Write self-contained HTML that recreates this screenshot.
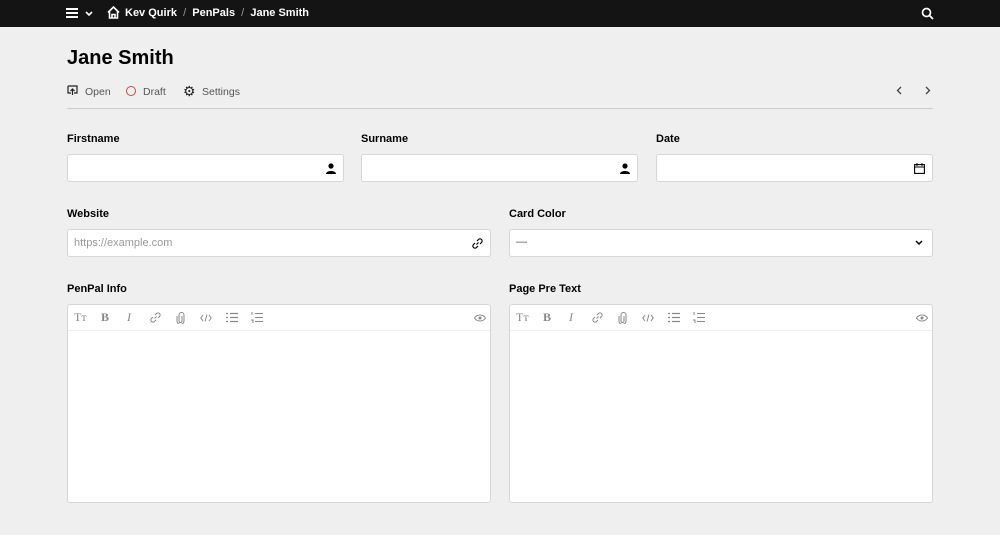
<!DOCTYPE html><html><head><style>
*{box-sizing:border-box;margin:0;padding:0}
body{width:1000px;height:535px;background:#efefef;font-family:"Liberation Sans",sans-serif;position:relative;overflow:hidden;color:#000}
.top{position:absolute;left:0;top:0;width:1000px;height:27px;background:#141414;color:#fff;font-size:11px}
.a{position:absolute}
h1{position:absolute;left:67px;top:47px;font-size:20px;font-weight:bold}
.btn{position:absolute;top:86px;font-size:10.5px;color:#555}
.hr{position:absolute;left:67px;top:108px;width:866px;height:1px;background:#ccc}
.lbl{position:absolute;font-size:11px;font-weight:bold}
.in{position:absolute;background:#fff;border:1px solid #d6d6d6;border-radius:3px}
.tb{position:absolute;left:0;top:0;right:0;height:26px;border-bottom:1px solid #eee;font-size:12px;color:#888}
.tb span{position:absolute;top:5px;font-family:"Liberation Serif",serif}
.tb svg{position:absolute;top:7px}
</style></head><body>
<div class="top">
<div class="a" style="left:66px;top:8px;width:12px;height:2px;background:#fff;box-shadow:0 4px 0 #fff,0 8px 0 #fff"></div>
<svg class="a" style="left:85px;top:11px" width="8" height="6"><path d="M1 1l3 3 3-3" fill="none" stroke="#fff" stroke-width="1.6"/></svg>
<svg class="a" style="left:107px;top:6px" width="13" height="13" viewBox="0 0 13 13"><path d="M1 6.5L6.5 1 12 6.5M2.5 5v7h8V5M5 12V8.5h3V12" fill="none" stroke="#fff" stroke-width="1.6"/></svg>
<div class="a" style="left:125px;top:7px;font-weight:bold">Kev Quirk &nbsp;<span style="color:#999;font-weight:normal">/</span>&nbsp; PenPals &nbsp;<span style="color:#999;font-weight:normal">/</span>&nbsp; Jane Smith</div>
<svg class="a" style="left:921px;top:7px" width="13" height="13" viewBox="0 0 13 13"><circle cx="5.5" cy="5.5" r="4" fill="none" stroke="#fff" stroke-width="1.7"/><path d="M8.5 8.5L12 12" stroke="#fff" stroke-width="1.8"/></svg>
</div>
<h1>Jane Smith</h1>
<svg class="a" style="left:67px;top:85px" width="11" height="11" viewBox="0 0 11 11"><path d="M1 1h9v7H7M4 8H1V1M5.5 4v6M3.5 6l2-2 2 2" fill="none" stroke="#222" stroke-width="1.2"/></svg>
<div class="btn" style="left:85px">Open</div>
<div class="a" style="left:126px;top:86px;width:10px;height:10px;border:1.3px solid #d04545;border-radius:50%"></div>
<div class="btn" style="left:143px">Draft</div>
<div class="a" style="left:183px;top:83px;font-size:14px;color:#222">⚙</div>
<div class="btn" style="left:202px">Settings</div>
<svg class="a" style="left:896px;top:86px" width="6" height="9"><path d="M5 1L1.5 4.5 5 8" fill="none" stroke="#444" stroke-width="1.3"/></svg>
<svg class="a" style="left:925px;top:86px" width="6" height="9"><path d="M1 1l3.5 3.5L1 8" fill="none" stroke="#444" stroke-width="1.3"/></svg>
<div class="hr"></div>

<div class="lbl" style="left:67px;top:133px">Firstname</div>
<div class="lbl" style="left:361px;top:133px">Surname</div>
<div class="lbl" style="left:656px;top:133px">Date</div>
<div class="in" style="left:67px;top:154px;width:277px;height:28px"><svg class="a" style="right:7px;top:8px" width="10" height="11"><circle cx="5" cy="3" r="2.6"/><path d="M0 11c0-4 10-4 10 0z"/></svg></div>
<div class="in" style="left:361px;top:154px;width:277px;height:28px"><svg class="a" style="right:7px;top:8px" width="10" height="11"><circle cx="5" cy="3" r="2.6"/><path d="M0 11c0-4 10-4 10 0z"/></svg></div>
<div class="in" style="left:656px;top:154px;width:277px;height:28px"><svg class="a" style="right:7px;top:8px" width="11" height="11"><rect x=".6" y="1.6" width="9.8" height="8.8" fill="none" stroke="#000" stroke-width="1.1"/><path d="M1 4h9M3 0v3M8 0v3" stroke="#000"/></svg></div>

<div class="lbl" style="left:67px;top:208px">Website</div>
<div class="lbl" style="left:509px;top:208px">Card Color</div>
<div class="in" style="left:67px;top:229px;width:424px;height:28px"><span class="a" style="left:6px;top:7px;font-size:11px;color:#999">https://example.com</span><svg class="a" style="right:7px;top:8px" width="11" height="11" viewBox="0 0 11 11"><path d="M4.5 6.5l2-2M5 3l1.5-1.5a2 2 0 013 3L8 6M6 8L4.5 9.5a2 2 0 01-3-3L3 5" fill="none" stroke="#000" stroke-width="1.2"/></svg></div>
<div class="in" style="left:509px;top:229px;width:424px;height:28px"><span class="a" style="left:6px;top:6px;font-size:11px;color:#555">—</span><svg class="a" style="right:9px;top:10px" width="8" height="6"><path d="M1 1l3 3 3-3" fill="none" stroke="#000" stroke-width="1.5"/></svg></div>

<div class="lbl" style="left:67px;top:283px">PenPal Info</div>
<div class="lbl" style="left:509px;top:283px">Page Pre Text</div>
<div class="in" style="left:67px;top:304px;width:424px;height:199px"><div class="tb">
<span style="left:6px">Tт</span><span style="left:33px;font-weight:bold">B</span><span style="left:59px;font-style:italic">I</span>
<svg style="left:82px" width="11" height="11" viewBox="0 0 11 11"><path d="M4.5 6.5l2-2M5 3l1.5-1.5a2 2 0 013 3L8 6M6 8L4.5 9.5a2 2 0 01-3-3L3 5" fill="none" stroke="#888" stroke-width="1"/></svg>
<svg style="left:108px" width="9" height="12" viewBox="0 0 9 12"><path d="M6 4v5a1.5 1.5 0 01-3 0V3a2.5 2.5 0 015 0v6a3.5 3.5 0 01-7 0V4" fill="none" stroke="#888" stroke-width="1"/></svg>
<svg style="left:132px;top:9px" width="12" height="8" viewBox="0 0 12 8"><path d="M3 1L0.8 4 3 7M9 1l2.2 3L9 7M7 0.5L5 7.5" fill="none" stroke="#888"/></svg>
<svg style="left:158px" width="12" height="11" viewBox="0 0 12 11"><path d="M0 1.5h2M0 5.5h2M0 9.5h2M4 1.5h8M4 5.5h8M4 9.5h8" stroke="#888" stroke-width="1.3"/></svg>
<svg style="left:183px" width="12" height="11" viewBox="0 0 12 11"><path d="M1 0v3M4 1.5h8M4 5.5h8M4 9.5h8M0 8h2v3" fill="none" stroke="#888"/></svg>
<svg style="left:406px;top:9px" width="12" height="8" viewBox="0 0 12 8"><path d="M0.5 4C3 0 9 0 11.5 4 9 8 3 8 0.5 4z" fill="none" stroke="#888"/><circle cx="6" cy="4" r="1.5" fill="#888"/></svg>
</div></div>
<div class="in" style="left:509px;top:304px;width:424px;height:199px"><div class="tb">
<span style="left:6px">Tт</span><span style="left:33px;font-weight:bold">B</span><span style="left:59px;font-style:italic">I</span>
<svg style="left:82px" width="11" height="11" viewBox="0 0 11 11"><path d="M4.5 6.5l2-2M5 3l1.5-1.5a2 2 0 013 3L8 6M6 8L4.5 9.5a2 2 0 01-3-3L3 5" fill="none" stroke="#888" stroke-width="1"/></svg>
<svg style="left:108px" width="9" height="12" viewBox="0 0 9 12"><path d="M6 4v5a1.5 1.5 0 01-3 0V3a2.5 2.5 0 015 0v6a3.5 3.5 0 01-7 0V4" fill="none" stroke="#888" stroke-width="1"/></svg>
<svg style="left:132px;top:9px" width="12" height="8" viewBox="0 0 12 8"><path d="M3 1L0.8 4 3 7M9 1l2.2 3L9 7M7 0.5L5 7.5" fill="none" stroke="#888"/></svg>
<svg style="left:158px" width="12" height="11" viewBox="0 0 12 11"><path d="M0 1.5h2M0 5.5h2M0 9.5h2M4 1.5h8M4 5.5h8M4 9.5h8" stroke="#888" stroke-width="1.3"/></svg>
<svg style="left:183px" width="12" height="11" viewBox="0 0 12 11"><path d="M1 0v3M4 1.5h8M4 5.5h8M4 9.5h8M0 8h2v3" fill="none" stroke="#888"/></svg>
<svg style="left:406px;top:9px" width="12" height="8" viewBox="0 0 12 8"><path d="M0.5 4C3 0 9 0 11.5 4 9 8 3 8 0.5 4z" fill="none" stroke="#888"/><circle cx="6" cy="4" r="1.5" fill="#888"/></svg>
</div></div>
</body></html>
